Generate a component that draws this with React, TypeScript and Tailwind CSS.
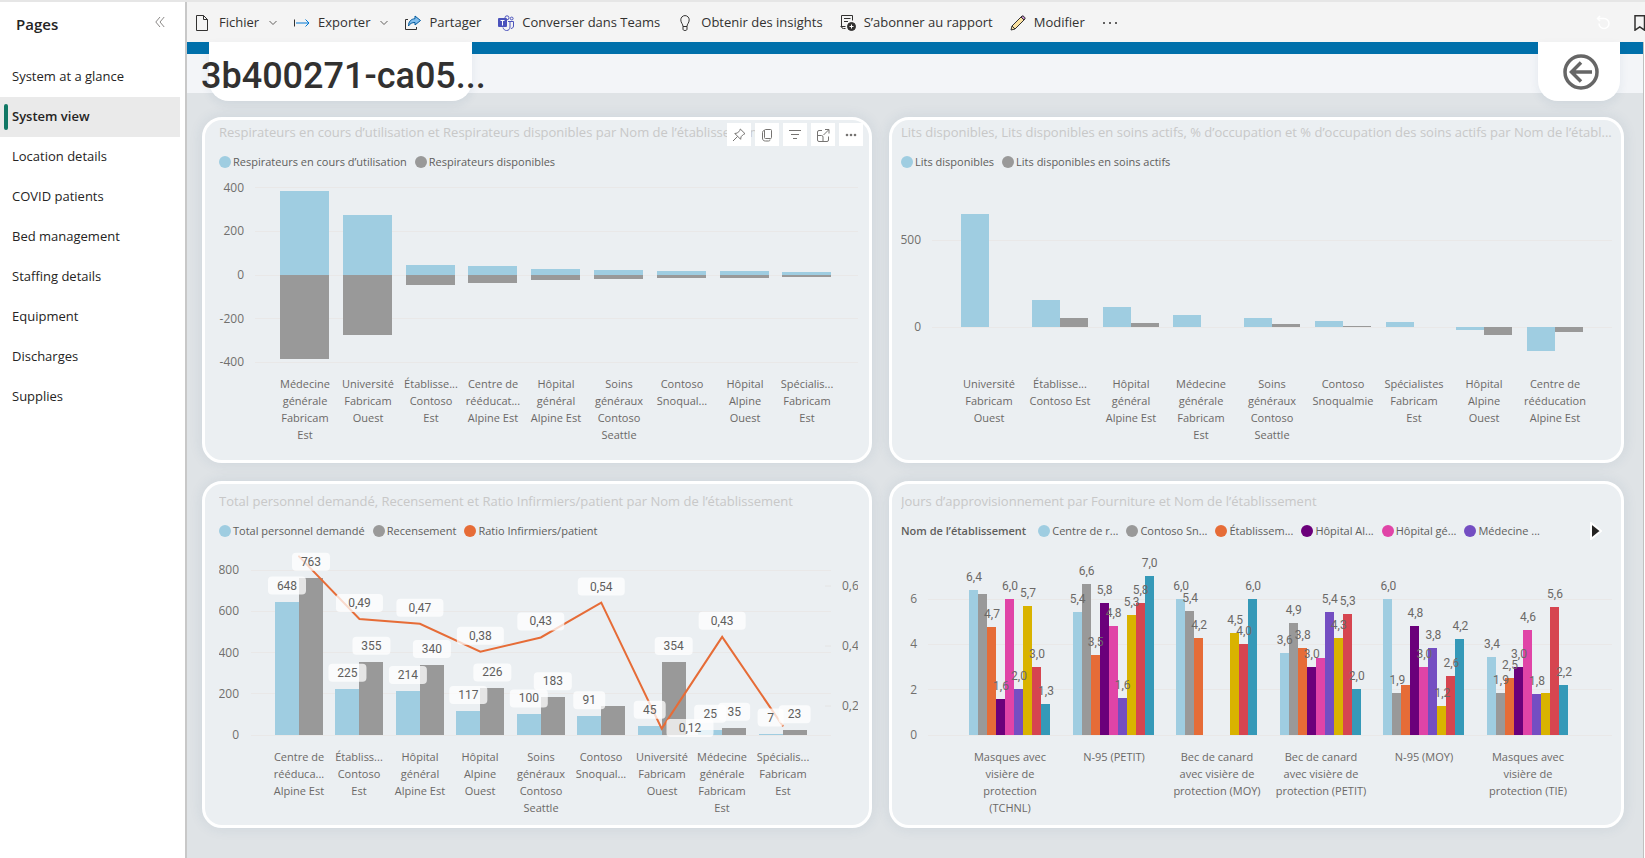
import type { ReactNode } from "react";

const BLUE = "#9fcde1";
const GREY = "#999999";
const ORANGE = "#e66c37";
const SERIES = [BLUE, GREY, ORANGE, "#6b007b", "#e044a7", "#744ec2", "#d9b300", "#d64550", "#3599b8"];

const pages = [
  "System at a glance",
  "System view",
  "Location details",
  "COVID patients",
  "Bed management",
  "Staffing details",
  "Equipment",
  "Discharges",
  "Supplies",
];

interface Category {
  lines: string[];
  values: number[];
}

const ventilators: Category[] = [
  { lines: ["Médecine", "générale", "Fabricam", "Est"], values: [387, -384] },
  { lines: ["Université", "Fabricam", "Ouest"], values: [276, -274] },
  { lines: ["Établisse...", "Contoso", "Est"], values: [47, -46] },
  { lines: ["Centre de", "rééducat...", "Alpine Est"], values: [39, -37] },
  { lines: ["Hôpital", "général", "Alpine Est"], values: [26, -23] },
  { lines: ["Soins", "généraux", "Contoso", "Seattle"], values: [21, -20] },
  { lines: ["Contoso", "Snoqual..."], values: [17, -15] },
  { lines: ["Hôpital", "Alpine", "Ouest"], values: [17, -15] },
  { lines: ["Spécialis...", "Fabricam", "Est"], values: [12, -10] },
];

const beds: Category[] = [
  { lines: ["Université", "Fabricam", "Ouest"], values: [650, 0] },
  { lines: ["Établisse...", "Contoso Est"], values: [153, 53] },
  { lines: ["Hôpital", "général", "Alpine Est"], values: [114, 24] },
  { lines: ["Médecine", "générale", "Fabricam", "Est"], values: [68, 0] },
  { lines: ["Soins", "généraux", "Contoso", "Seattle"], values: [51, 18] },
  { lines: ["Contoso", "Snoqualmie"], values: [36, 8] },
  { lines: ["Spécialistes", "Fabricam", "Est"], values: [30, 0] },
  { lines: ["Hôpital", "Alpine", "Ouest"], values: [-20, -44] },
  { lines: ["Centre de", "rééducation", "Alpine Est"], values: [-137, -27] },
];

// values: requested staff, census, nurse/patient ratio
const staffing: Category[] = [
  { lines: ["Centre de", "rééduca...", "Alpine Est"], values: [648, 763, 0.7] },
  { lines: ["Établiss...", "Contoso", "Est"], values: [225, 355, 0.49] },
  { lines: ["Hôpital", "général", "Alpine Est"], values: [214, 340, 0.474] },
  { lines: ["Hôpital", "Alpine", "Ouest"], values: [117, 226, 0.38] },
  { lines: ["Soins", "généraux", "Contoso", "Seattle"], values: [100, 183, 0.428] },
  { lines: ["Contoso", "Snoqual..."], values: [91, 140, 0.545] },
  { lines: ["Université", "Fabricam", "Ouest"], values: [45, 354, 0.122] },
  { lines: ["Médecine", "générale", "Fabricam", "Est"], values: [25, 35, 0.43] },
  { lines: ["Spécialis...", "Fabricam", "Est"], values: [7, 23, 0.132] },
];

interface SupplyGroup extends Category {
  labels: string[];
}

const supplies: SupplyGroup[] = [
  {
    lines: ["Masques avec", "visière de", "protection", "(TCHNL)"],
    values: [6.42, 6.22, 4.75, 1.6, 6.02, 2.02, 5.7, 3.02, 1.36],
    labels: ["6,4", "", "4,7", "1,6", "6,0", "2,0", "5,7", "3,0", "1,3"],
  },
  {
    lines: ["N-95 (PETIT)"],
    values: [5.42, 6.65, 3.55, 5.81, 4.81, 1.62, 5.3, 5.81, 7.01],
    labels: ["5,4", "6,6", "3,5", "5,8", "4,8", "1,6", "5,3", "5,8", "7,0"],
  },
  {
    lines: ["Bec de canard", "avec visière de", "protection (MOY)"],
    values: [6.02, 5.47, 4.27, 0, 0, 0, 4.5, 4.02, 6.02],
    labels: ["6,0", "5,4", "4,2", "", "", "", "4,5", "4,0", "6,0"],
  },
  {
    lines: ["Bec de canard", "avec visière de", "protection (PETIT)"],
    values: [3.62, 4.93, 3.83, 3.02, 3.39, 5.42, 4.28, 5.36, 2.02],
    labels: ["3,6", "4,9", "3,8", "3,0", "", "5,4", "4,3", "5,3", "2,0"],
  },
  {
    lines: ["N-95 (MOY)"],
    values: [6.02, 1.87, 2.19, 4.83, 3.02, 3.83, 1.26, 2.6, 4.23],
    labels: ["6,0", "1,9", "", "4,8", "3,0", "3,8", "1,2", "2,6", "4,2"],
  },
  {
    lines: ["Masques avec", "visière de", "protection (TIE)"],
    values: [3.43, 1.87, 2.51, 3.02, 4.63, 1.82, 1.85, 5.64, 2.22],
    labels: ["3,4", "1,9", "2,5", "3,0", "4,6", "1,8", "", "5,6", "2,2"],
  },
];

function CategoryLabel({ x, y, lines }: { x: number; y: number; lines: string[] }) {
  return (
    <text textAnchor="middle" className="fill-[#6b6967] text-[11px]">
      {lines.map((line, i) => (
        <tspan key={line} x={x} y={y + i * 17}>
          {line}
        </tspan>
      ))}
    </text>
  );
}

interface GridProps {
  ticks: number[];
  y: (value: number) => number;
  labelX: number;
  from: number;
  to: number;
}

function Grid({ ticks, y, labelX, from, to }: GridProps) {
  return (
    <g>
      {ticks.map((tick) => (
        <g key={tick}>
          <line x1={from} x2={to} y1={y(tick)} y2={y(tick)} stroke="#e9e8e8" shapeRendering="crispEdges" />
          <text x={labelX} y={Math.round(y(tick)) + 4} textAnchor="end" className="fill-[#716f6d] text-[12px]">
            {tick}
          </text>
        </g>
      ))}
    </g>
  );
}

interface BarProps {
  x: number;
  width: number;
  zero: number;
  end: number;
  color: string;
}

function Bar({ x, width, zero, end, color }: BarProps) {
  return (
    <rect
      x={x}
      y={Math.min(zero, end)}
      width={width}
      height={Math.abs(zero - end)}
      fill={color}
      shapeRendering="crispEdges"
    />
  );
}

function VentilatorChart() {
  const y = (v: number) => 103 - v * 0.218;
  return (
    <svg viewBox="0 0 639 288" className="block h-auto w-full" role="img" aria-label="Respirateurs">
      <Grid ticks={[400, 200, 0, -200, -400]} y={y} labelX={25} from={36} to={639} />
      {ventilators.map((c, i) => {
        const x = 61 + i * 62.8;
        return (
          <g key={i}>
            <Bar x={x} width={49} zero={y(0)} end={y(c.values[0])} color={BLUE} />
            <Bar x={x} width={49} zero={y(0)} end={y(c.values[1])} color={GREY} />
            <CategoryLabel x={Math.round(x + 25)} y={216} lines={c.lines} />
          </g>
        );
      })}
    </svg>
  );
}

function BedChart() {
  const y = (v: number) => 155 - v * 0.174;
  return (
    <svg viewBox="0 0 711 288" className="block h-auto w-full" role="img" aria-label="Lits disponibles">
      <Grid ticks={[500, 0]} y={y} labelX={20} from={31} to={711} />
      {beds.map((c, i) => {
        const x = 60 + i * 70.75;
        return (
          <g key={i}>
            <Bar x={x} width={28} zero={y(0)} end={y(c.values[0])} color={BLUE} />
            <Bar x={x + 28} width={28} zero={y(0)} end={y(c.values[1])} color={GREY} />
            <CategoryLabel x={Math.round(x + 28)} y={216} lines={c.lines} />
          </g>
        );
      })}
    </svg>
  );
}

function DataLabel({ x, y, text }: { x: number; y: number; text: string }) {
  const width = [26, 32, 38, 47][text.length - 1];
  return (
    <g>
      <rect x={x - width / 2} y={y - 9} width={width} height={18} rx={4} fill="#ffffff" fillOpacity={0.75} />
      <text x={x} y={y + 4} textAnchor="middle" className="fill-[#605e5c] font-[Roboto,sans-serif] text-[12px]">
        {text}
      </text>
    </g>
  );
}

function StaffingChart() {
  const y = (v: number) => 194 - v * 0.206;
  const yRatio = (v: number) => 224 - v * 298;
  const center = (i: number) => 80 + i * 60.45;
  const ratioTexts = ["", "0,49", "0,47", "0,38", "0,43", "0,54", "", "0,43", ""];
  return (
    <svg viewBox="0 0 639 284" className="block h-auto w-full" role="img" aria-label="Total personnel demandé">
      <Grid ticks={[800, 600, 400, 200, 0]} y={y} labelX={20} from={32} to={612} />
      {["0,6", "0,4", "0,2"].map((label, i) => (
        <g key={label}>
          <line x1={606} x2={612} y1={45 + i * 60} y2={45 + i * 60} stroke="#e4e4e4" />
          <text x={623} y={49 + i * 60} className="fill-[#716f6d] text-[12px]">
            {label}
          </text>
        </g>
      ))}
      {staffing.map((c, i) => (
        <g key={i}>
          <Bar x={center(i) - 24} width={24} zero={y(0)} end={y(c.values[0])} color={BLUE} />
          <Bar x={center(i)} width={24} zero={y(0)} end={y(c.values[1])} color={GREY} />
          <CategoryLabel x={Math.round(center(i))} y={220} lines={c.lines} />
        </g>
      ))}
      <polyline
        points={staffing.map((c, i) => `${center(i)},${yRatio(c.values[2])}`).join(" ")}
        fill="none"
        stroke={ORANGE}
        strokeWidth={2}
        strokeLinecap="round"
      />
      {staffing.map((c, i) => (
        <g key={i}>
          <DataLabel x={center(i) - 12} y={y(c.values[0]) - 16} text={String(c.values[0])} />
          {c.values[1] !== 140 && (
            <DataLabel x={center(i) + 12} y={y(c.values[1]) - 16} text={String(c.values[1])} />
          )}
          {ratioTexts[i] && <DataLabel x={center(i)} y={yRatio(c.values[2]) - 16} text={ratioTexts[i]} />}
        </g>
      ))}
      <DataLabel x={471} y={187} text="0,12" />
    </svg>
  );
}

function SupplyChart() {
  const y = (v: number) => 194 - v * 22.65;
  const groupX = (i: number) => 68 + i * 103.6;
  return (
    <svg viewBox="0 0 711 284" className="block h-auto w-full" role="img" aria-label="Jours d’approvisionnement">
      <Grid ticks={[6, 4, 2, 0]} y={y} labelX={16} from={27} to={711} />
      {supplies.map((group, i) => (
        <g key={i}>
          {group.values.map((v, j) => (
            <Bar key={j} x={groupX(i) + j * 9} width={9} zero={y(0)} end={y(v)} color={SERIES[j]} />
          ))}
          <CategoryLabel x={Math.round(groupX(i) + 41)} y={220} lines={group.lines} />
        </g>
      ))}
      {supplies.map((group, i) =>
        group.labels.map((label, j) => (
          <text
            key={`${i}-${j}`}
            x={groupX(i) + j * 9 + 5}
            y={y(group.values[j]) - 9}
            textAnchor="middle"
            className="fill-[#6b6967] font-[Roboto,sans-serif] text-[12px]"
          >
            {label}
          </text>
        )),
      )}
    </svg>
  );
}

function LegendItem({ color, children }: { color: string; children: ReactNode }) {
  return (
    <li className="flex items-center gap-0.5 whitespace-nowrap">
      <span className="size-3 rounded-full" style={{ backgroundColor: color }} />
      {children}
    </li>
  );
}

interface CardProps {
  title: string;
  legend: ReactNode;
  className: string;
  children: ReactNode;
}

function Card({ title, legend, className, children }: CardProps) {
  return (
    <section
      className={`relative min-w-0 rounded-[20px] border-3 border-white bg-[#ebeff2] shadow-[0_0_14px_rgba(40,80,120,0.1)] ${className}`}
    >
      <h2 className="truncate text-[13px] leading-5 text-[#c8c8c8]">{title}</h2>
      <div className="mt-2.5 flex h-5 items-center text-[11px] text-[#605e5c]">{legend}</div>
      {children}
    </section>
  );
}

function VisualButton({ label, children }: { label: string; children: ReactNode }) {
  return (
    <button type="button" aria-label={label} className="flex h-[23px] w-6 items-center justify-center bg-white">
      <svg viewBox="0 0 14 14" className="size-3.5" fill="none" stroke="#767472">
        {children}
      </svg>
    </button>
  );
}

function VisualHeader() {
  return (
    <div className="absolute top-[3px] right-1.5 flex gap-1">
      <VisualButton label="Épingler le visuel">
        <path d="M8.3 1 13 5.7l-1.6.7-2.3 2.3-.5 2.6L2.8 5.5l2.6-.5 2.3-2.3zM5.6 8.4 1 13" />
      </VisualButton>
      <VisualButton label="Copier">
        <rect x="4.5" y="1.500" width="7" height="9" rx="1" />
        <path d="M4.500 2.500c-1.300 0-2 .8-2 2V10c0 2 1 3 3 3h3c1.200 0 1.500-.6 1.500-1.500" />
      </VisualButton>
      <VisualButton label="Filtres">
        <path d="M1 2.500h12M3 6.500h8M5 10.500h4" />
      </VisualButton>
      <VisualButton label="Mode Focus">
        <path d="M6 2.500H3A1.500 1.500 0 0 0 1.500 4v8A1.500 1.500 0 0 0 3 13.500h8a1.500 1.500 0 0 0 1.500-1.500V8.500M1.500 7.500h4a1.500 1.500 0 0 1 1.500 1.500v4.500M7.500 7l5-5M9 1.500h4v4" />
      </VisualButton>
      <VisualButton label="Plus d’options">
        <g fill="#767472" stroke="none">
          <circle cx="3" cy="7" r="1.300" />
          <circle cx="7" cy="7" r="1.300" />
          <circle cx="11" cy="7" r="1.300" />
        </g>
      </VisualButton>
    </div>
  );
}

function Icon({ children }: { children: ReactNode }) {
  return (
    <svg viewBox="0 0 16 16" className="size-4 shrink-0" fill="none" stroke="#323130">
      {children}
    </svg>
  );
}

function Chevron() {
  return (
    <svg viewBox="0 0 8 8" className="ml-0.5 size-2" fill="none" stroke="#605e5c">
      <path d="m.5 2 3.500 3.500L7.500 2" />
    </svg>
  );
}

function ToolbarButton({ icon, children, menu }: { icon: ReactNode; children: ReactNode; menu?: boolean }) {
  return (
    <button type="button" className="flex items-center gap-2 whitespace-nowrap">
      {icon}
      {children}
      {menu && <Chevron />}
    </button>
  );
}

function Toolbar() {
  return (
    <div className="flex h-10 items-center bg-[#f4f4f4] pt-0.5 pl-2 text-[13px] text-[#323130]">
      <div className="flex items-center gap-[17px]">
        <ToolbarButton
          menu
          icon={
            <Icon>
              <path d="M1.500.500h7l4 4v11h-11zM8.500.500v4h4" />
            </Icon>
          }
        >
          Fichier
        </ToolbarButton>
        <ToolbarButton
          menu
          icon={
            <Icon>
              <path d="M.5 4.500v7" />
              <path d="M2 8h13M11.500 4.500 15 8l-3.500 3.500" stroke="#0078d4" />
            </Icon>
          }
        >
          Exporter
        </ToolbarButton>
        <ToolbarButton
          icon={
            <Icon>
              <path d="M3 4.500H.5v10h11V12" />
              <path d="M10 1l5.500 4.500L10 10V7.500C7 7.500 5 8.500 3.500 11 3.500 6.500 6 4 10 3.700z" fill="#83beec" stroke="#005a9e" />
            </Icon>
          }
        >
          Partager
        </ToolbarButton>
        <ToolbarButton
          icon={
            <Icon>
              <g stroke="#4b53bc">
                <circle cx="9" cy="2.800" r="2" />
                <circle cx="13.700" cy="3.500" r="1.400" />
                <path d="M10 6.500h5.500V11c0 1.500-1.200 2.500-2.500 2.500M5 12.500c.5 2 2 3 3.500 3 2.300 0 3.500-1.500 3.500-3.500V6.500" />
              </g>
              <rect x="0" y="3" width="9" height="9" rx="1" fill="#4b53bc" stroke="none" />
              <path d="M2.500 5.500h4M4.500 5.500v5" stroke="#ffffff" />
            </Icon>
          }
        >
          Converser dans Teams
        </ToolbarButton>
        <ToolbarButton
          icon={
            <Icon>
              <path d="M6 11.500C6 9 3.800 8 3.800 4.800a4.200 4.200 0 0 1 8.400 0C12.200 8 10 9 10 11.500zM6 11.500v2.500c0 1 .7 1.500 2 1.500s2-.5 2-1.500v-2.500" />
            </Icon>
          }
        >
          Obtenir des insights
        </ToolbarButton>
        <ToolbarButton
          icon={
            <Icon>
              <path d="M5.500 13.500h-2A2 2 0 0 1 1.500 11.500V.500h11v5M4 3.500h6.500M4 6.500h4M.5 11.500h5" />
              <circle cx="11.500" cy="11.500" r="4" fill="#323130" />
              <path d="M11.500 9.500v4M9.500 11.500h4" stroke="#ffffff" />
            </Icon>
          }
        >
          S’abonner au rapport
        </ToolbarButton>
        <ToolbarButton
          icon={
            <Icon>
              <path d="M1 15l1-4L11 2l3 3-9 9z" fill="#fbe1a0" />
              <path d="M11 2l1-1c1-.8 3.800 1.800 3 3l-1 1z" fill="#c88fd0" />
              <path d="M2 11l3 3" />
            </Icon>
          }
        >
          Modifier
        </ToolbarButton>
        <button type="button" aria-label="Autres options">
          <Icon>
            <g fill="#323130" stroke="none">
              <circle cx="2" cy="8" r="1" />
              <circle cx="8" cy="8" r="1" />
              <circle cx="14" cy="8" r="1" />
            </g>
          </Icon>
        </button>
      </div>
      <div className="ml-auto flex items-center gap-[22px] overflow-hidden">
        <button type="button" aria-label="Rétablir">
          <svg viewBox="0 0 16 16" className="size-4" fill="none" stroke="#ffffff" strokeWidth={1.500}>
            <path d="M5 1 2.500 3.500 5 6M2.500 3.500H9a5 5 0 1 1-5 5" />
          </svg>
        </button>
        <button type="button" aria-label="Signets" className="-mr-1">
          <svg viewBox="0 0 16 16" className="size-4" fill="none" stroke="#323130" strokeWidth={1.500}>
            <path d="M2 .8h9.500v14.400L6.800 12 2 15.200z" />
          </svg>
        </button>
      </div>
    </div>
  );
}

function Sidebar() {
  return (
    <aside className="w-[187px] shrink-0 border-r-2 border-[#c8c8c8] bg-white text-[#252423]">
      <div className="flex h-[55px] items-start justify-between pt-2.5 pr-5 pl-4">
        <h2 className="text-[15px] leading-6 font-semibold">Pages</h2>
        <button type="button" aria-label="Réduire le volet" className="pt-1">
          <svg viewBox="0 0 10 12" className="h-3 w-2.5" fill="none" stroke="#8a8886">
            <path d="M5 1 .8 6 5 11M9.200 1 5 6l4.200 5" />
          </svg>
        </button>
      </div>
      <nav className="mr-[5px]">
        {pages.map((page) => {
          const active = page === "System view";
          return (
            <a
              key={page}
              href="#"
              aria-current={active ? "page" : undefined}
              className={`flex h-10 items-center pl-1 text-[13px] ${active ? "bg-[#eaeaea] font-semibold" : ""}`}
            >
              <span className={`mr-1 h-[26px] w-1 rounded-sm ${active ? "bg-[#117865]" : ""}`} />
              {page}
            </a>
          );
        })}
      </nav>
    </aside>
  );
}

export default function App() {
  return (
    <div className="flex min-h-screen border-t-2 border-[#e6e6e6] bg-white font-['Open_Sans','Noto_Sans',sans-serif]">
      <Sidebar />
      <div className="flex min-w-0 flex-1 flex-col">
        <Toolbar />
        <main className="mr-px flex-1 border-r border-[#c0c0c0] bg-[#dfe3e6]">
          <header className="flex h-[51px] justify-between border-t-12 border-[#0070ab] bg-[#f3f5f8] pr-[23px] pl-[22px]">
            <div className="-mt-3 h-[59px] w-[263px] rounded-b-[20px] bg-white pt-2 shadow-[0_4px_10px_rgba(40,80,120,0.08)]">
              <h1 className="-ml-2 font-[Roboto,sans-serif] text-4xl leading-[52px] font-medium whitespace-nowrap text-[#323130]">
                3b400271-ca05...
              </h1>
            </div>
            <button
              type="button"
              aria-label="Retour"
              className="-mt-3 flex h-[59px] w-[82px] items-center justify-center rounded-b-[20px] bg-white pl-1 shadow-[0_4px_10px_rgba(40,80,120,0.08)]"
            >
              <svg viewBox="0 0 36 36" className="size-9" fill="none" stroke="#666666" strokeWidth={3.500}>
                <circle cx="18" cy="18" r="16" />
                <path d="M29 18H9M18 8.500 8.500 18l9.500 9.500" />
              </svg>
            </button>
          </header>
          <div className="grid grid-cols-[670fr_735fr] items-start gap-x-[17px] gap-y-[18px] pt-6 pr-[19px] pb-[30px] pl-[15px]">
            <Card
              title="Respirateurs en cours d’utilisation et Respirateurs disponibles par Nom de l’établissement"
              className="pt-0.5 pr-[11px] pl-3.5"
              legend={
                <ul className="flex gap-2">
                  <LegendItem color={BLUE}>Respirateurs en cours d’utilisation</LegendItem>
                  <LegendItem color={GREY}>Respirateurs disponibles</LegendItem>
                </ul>
              }
            >
              <VentilatorChart />
              <VisualHeader />
            </Card>
            <Card
              title="Lits disponibles, Lits disponibles en soins actifs, % d’occupation et % d’occupation des soins actifs par Nom de l’établ..."
              className="px-[9px] pt-0.5"
              legend={
                <ul className="flex gap-2">
                  <LegendItem color={BLUE}>Lits disponibles</LegendItem>
                  <LegendItem color={GREY}>Lits disponibles en soins actifs</LegendItem>
                </ul>
              }
            >
              <BedChart />
            </Card>
            <Card
              title="Total personnel demandé, Recensement et Ratio Infirmiers/patient par Nom de l’établissement"
              className="pt-[7px] pr-[11px] pl-3.5"
              legend={
                <ul className="flex gap-2">
                  <LegendItem color={BLUE}>Total personnel demandé</LegendItem>
                  <LegendItem color={GREY}>Recensement</LegendItem>
                  <LegendItem color={ORANGE}>Ratio Infirmiers/patient</LegendItem>
                </ul>
              }
            >
              <StaffingChart />
            </Card>
            <Card
              title="Jours d’approvisionnement par Fourniture et Nom de l’établissement"
              className="px-[9px] pt-[7px]"
              legend={
                <>
                  <span className="mr-3 font-semibold whitespace-nowrap">Nom de l’établissement</span>
                  <ul className="flex gap-2">
                    <LegendItem color={SERIES[0]}>Centre de r...</LegendItem>
                    <LegendItem color={SERIES[1]}>Contoso Sn...</LegendItem>
                    <LegendItem color={SERIES[2]}>Établissem...</LegendItem>
                    <LegendItem color={SERIES[3]}>Hôpital Al...</LegendItem>
                    <LegendItem color={SERIES[4]}>Hôpital gé...</LegendItem>
                    <LegendItem color={SERIES[5]}>Médecine ...</LegendItem>
                  </ul>
                  <button type="button" aria-label="Légende suivante" className="mr-2.5 ml-auto">
                    <svg viewBox="0 0 12 18" className="h-[18px] w-3">
                      <path d="M1 1v16l10-8z" fill="#252423" stroke="#ffffff" strokeWidth={2} />
                    </svg>
                  </button>
                </>
              }
            >
              <SupplyChart />
            </Card>
          </div>
        </main>
      </div>
    </div>
  );
}
